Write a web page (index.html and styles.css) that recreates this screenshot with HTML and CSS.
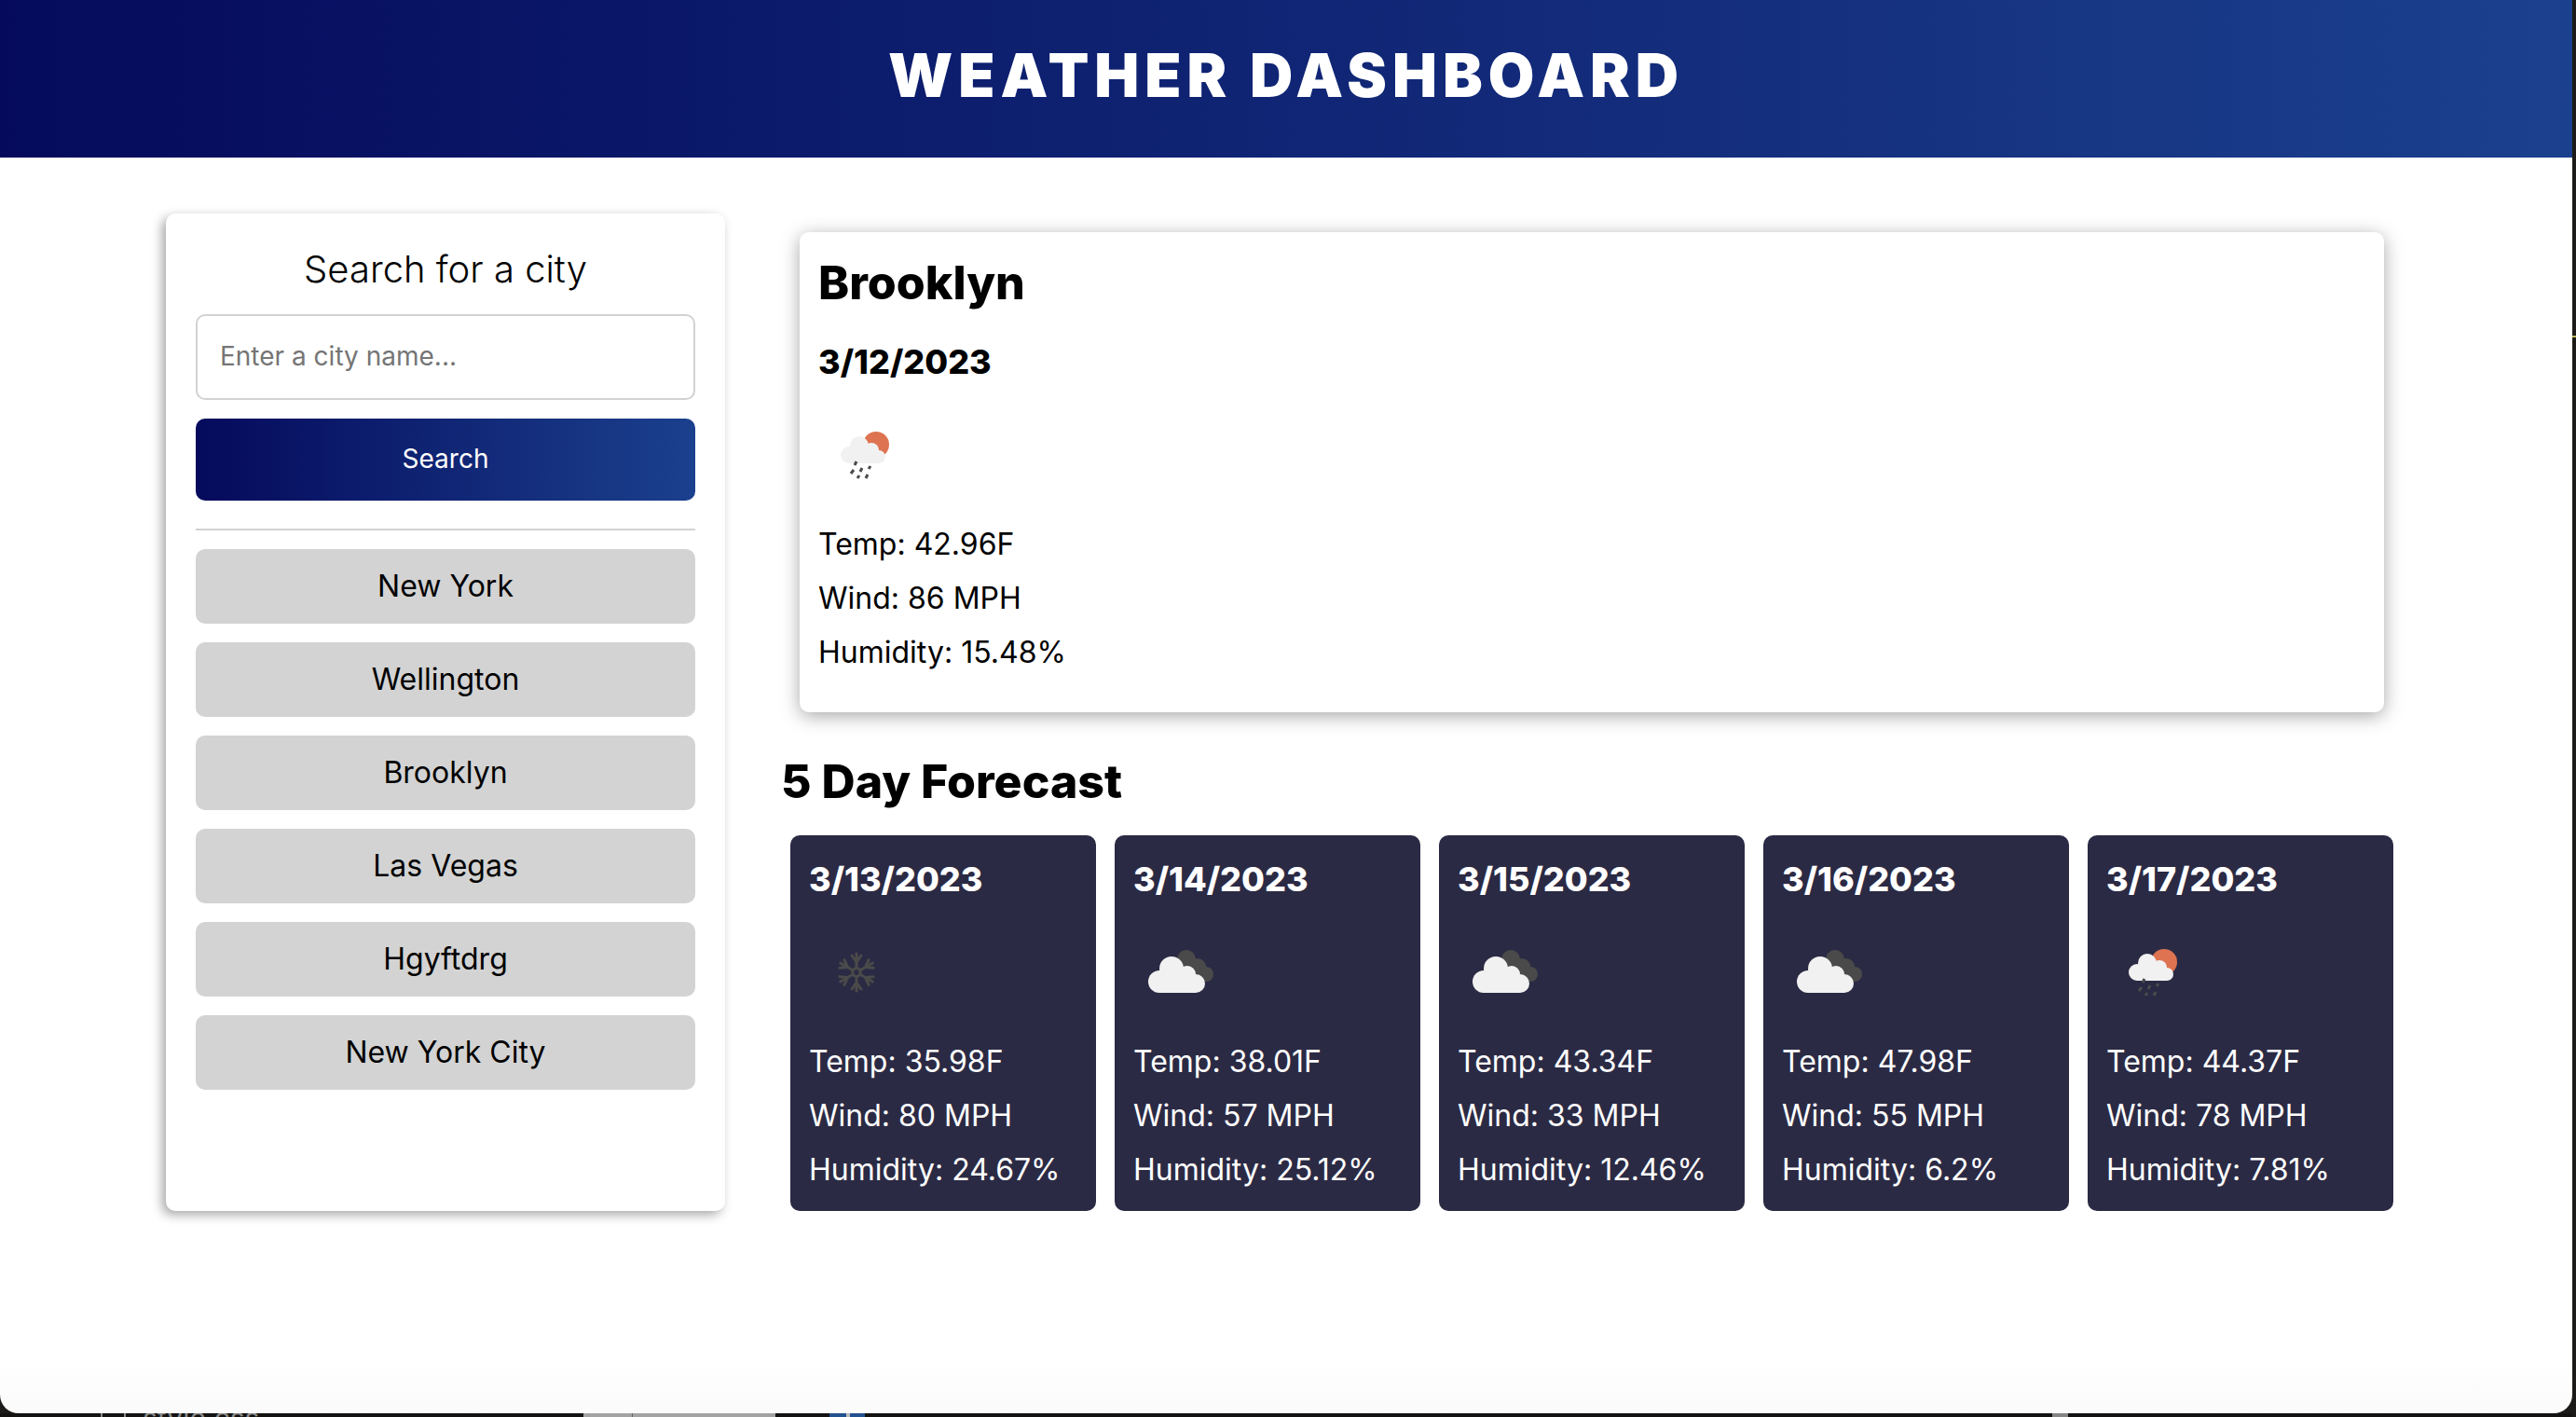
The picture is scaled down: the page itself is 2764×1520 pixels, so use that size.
FILE: index.html
```html
<!DOCTYPE html>
<html lang="en">
<head>
<meta charset="utf-8">
<title>Weather Dashboard</title>
<link rel="stylesheet" href="styles.css">
</head>
<body>
<svg class="sprite" aria-hidden="true">
  <symbol id="rain" viewBox="0 0 100 100">
    <circle cx="62" cy="40" r="14" fill="#de7351"/>
    <g fill="#f1f1f1">
      <circle cx="33" cy="51" r="9"/>
      <circle cx="44" cy="41" r="10"/>
      <circle cx="57" cy="46" r="8"/>
      <circle cx="65" cy="53" r="7"/>
      <path d="M33 44h26l6 10v6H33z"/>
    </g>
    <path d="M41 58l-2 4M47 65l-2 4M56 63l-2 3M38 67l-3 4M44 73l-2 3M53 72l-2 4" fill="none" stroke="#4b4b4b" stroke-width="3"/>
  </symbol>
  <symbol id="clouds" viewBox="0 0 100 100">
    <g fill="#4a4a4a">
      <circle cx="57" cy="37" r="10"/>
      <circle cx="69" cy="45" r="9"/>
      <circle cx="78" cy="53" r="8"/>
      <path d="M57 45l12-6 9 22H60z"/>
    </g>
    <g fill="#f1f1f1">
      <circle cx="28" cy="61" r="12"/>
      <circle cx="41" cy="47" r="13"/>
      <circle cx="58" cy="53" r="9"/>
      <circle cx="67" cy="63" r="10"/>
      <path d="M28 50h32l7 8v15H28z"/>
    </g>
  </symbol>
  <symbol id="snow" viewBox="0 0 100 100">
    <g fill="none" stroke="#4a4a4a" stroke-width="3" stroke-linecap="round">
      <path id="arm" d="M51 46V31M46 33l5 7 5-7"/>
      <use href="#arm" transform="rotate(60 51 51)"/>
      <use href="#arm" transform="rotate(120 51 51)"/>
      <use href="#arm" transform="rotate(180 51 51)"/>
      <use href="#arm" transform="rotate(240 51 51)"/>
      <use href="#arm" transform="rotate(300 51 51)"/>
      <path d="M51 46l4 2.500v5l-4 2.500-4-2.500v-5z"/>
    </g>
  </symbol>
</svg>
<div class="window">
  <header class="banner"><h1>WEATHER DASHBOARD</h1></header>
  <main class="layout">
    <aside class="search-panel">
      <form class="search-form">
        <label for="city">Search for a city</label>
        <input id="city" type="text" placeholder="Enter a city name...">
        <button type="button" class="search-button">Search</button>
      </form>
      <hr>
      <div class="history">
        <button type="button">New York</button>
        <button type="button">Wellington</button>
        <button type="button">Brooklyn</button>
        <button type="button">Las Vegas</button>
        <button type="button">Hgyftdrg</button>
        <button type="button">New York City</button>
      </div>
    </aside>
    <div class="results">
      <section class="today">
        <h2>Brooklyn</h2>
        <h3>3/12/2023</h3>
        <svg class="icon"><use href="#rain"/></svg>
        <p>Temp: 42.96F</p><p>Wind: 86 MPH</p><p>Humidity: 15.48%</p>
      </section>
      <h2 class="forecast-title">5 Day Forecast</h2>
      <section class="forecast">
        <article class="day"><h3>3/13/2023</h3><svg class="icon"><use href="#snow"/></svg><p>Temp: 35.98F</p><p>Wind: 80 MPH</p><p>Humidity: 24.67%</p></article>
        <article class="day"><h3>3/14/2023</h3><svg class="icon"><use href="#clouds"/></svg><p>Temp: 38.01F</p><p>Wind: 57 MPH</p><p>Humidity: 25.12%</p></article>
        <article class="day"><h3>3/15/2023</h3><svg class="icon"><use href="#clouds"/></svg><p>Temp: 43.34F</p><p>Wind: 33 MPH</p><p>Humidity: 12.46%</p></article>
        <article class="day"><h3>3/16/2023</h3><svg class="icon"><use href="#clouds"/></svg><p>Temp: 47.98F</p><p>Wind: 55 MPH</p><p>Humidity: 6.2%</p></article>
        <article class="day"><h3>3/17/2023</h3><svg class="icon"><use href="#rain"/></svg><p>Temp: 44.37F</p><p>Wind: 78 MPH</p><p>Humidity: 7.81%</p></article>
      </section>
    </div>
  </main>
</div>
<div class="desktop-edge"><i class="tick"></i><span>style.css</span></div>
</body>
</html>
```
FILE: styles.css
```css
* { box-sizing: border-box; }
body {
  display: flex;
  flex-direction: column;
  margin: 0;
  height: 100vh;
  padding-right: 4px;
  overflow: hidden;
  background:
    linear-gradient(#c4ba5c, #c4ba5c) right 0 top 360px / 4px 2px no-repeat,
    #1c1b19;
  color: #000;
  font-family: Inter, "Open Sans", sans-serif;
}
h1, h2, h3, p { margin: 0; }
.sprite { position: absolute; width: 0; height: 0; }
.window {
  flex: 1;
  overflow: hidden;
  border-radius: 0 0 20px 20px;
  background: linear-gradient(#fff 96%, #fbfbfb);
}
.banner {
  padding: 33px 0 40px;
  background: linear-gradient(to right, #050a5c, #1b408d);
  color: #fff;
  text-align: center;
}
h1 { font-size: 64px; font-weight: 900; line-height: 96px; letter-spacing: 6px; }
.layout {
  display: grid;
  grid-template-columns: 600px 1fr;
  gap: 60px;
  padding: 60px 192px 0 178px;
}
.search-panel {
  padding: 32px;
  border-radius: 10px;
  background: #fff;
  box-shadow: -4px 4px 12px rgba(0, 0, 0, .35);
}
.search-form { display: grid; gap: 20px; }
label { font-size: 40px; font-weight: 300; line-height: 56px; text-align: center; }
input {
  width: 100%;
  height: 92px;
  padding: 0 24px 2px;
  border: 2px solid #d2d2d2;
  border-radius: 10px;
  font: 28px Inter, sans-serif;
}
input::placeholder { color: #757575; }
button { padding: 0 0 2px; border: 0; border-radius: 10px; font-family: inherit; }
.search-button {
  height: 88px;
  background: linear-gradient(to right, #050a5c, #1b408d);
  color: #fff;
  font-size: 28px;
}
hr { height: 2px; margin: 30px 0 20px; border: 0; background: #d2d2d2; }
.history { display: grid; gap: 20px; }
.history button { height: 80px; background: #d3d3d3; color: #000; font-size: 32px; }
.today {
  margin: 20px 10px 0 20px;
  padding: 18px 20px 35px;
  border-radius: 10px;
  box-shadow: 0 4px 20px rgba(0, 0, 0, .35);
}
h2 { font-size: 50px; font-weight: 800; line-height: 72px; }
h3 { font-size: 36px; font-weight: 800; line-height: 54px; }
.today h3 { margin-top: 22px; }
.icon { display: block; width: 100px; height: 100px; margin: 22px 0 18px; }
p { font-size: 32px; line-height: 58px; }
.forecast-title { margin-top: 38px; }
.forecast {
  display: grid;
  grid-template-columns: repeat(5, 1fr);
  gap: 20px;
  padding: 22px 0 0 10px;
}
.day {
  padding: 20px 20px 15px;
  border-radius: 10px;
  background: #2b2a44;
  color: #fff;
}
.desktop-edge {
  display: flex;
  gap: 18px;
  height: 4px;
  padding-left: 108px;
  overflow: hidden;
  background:
    linear-gradient(#666, #666) 678px 0 / 1px 4px no-repeat,
    linear-gradient(#a3a3a3, #a3a3a3) 626px 0 / 206px 4px no-repeat,
    linear-gradient(#bbb, #bbb) 908px 0 / 4px 4px no-repeat,
    linear-gradient(#24518f, #24518f) 890px 0 / 38px 4px no-repeat,
    linear-gradient(#858585, #858585) 2202px 0 / 17px 4px no-repeat,
    #141311;
  color: #8a8a8a;
  font-size: 30px;
  line-height: 10px;
}
.tick { width: 27px; border: solid #8a8a8a; border-width: 0 2px; }
```
